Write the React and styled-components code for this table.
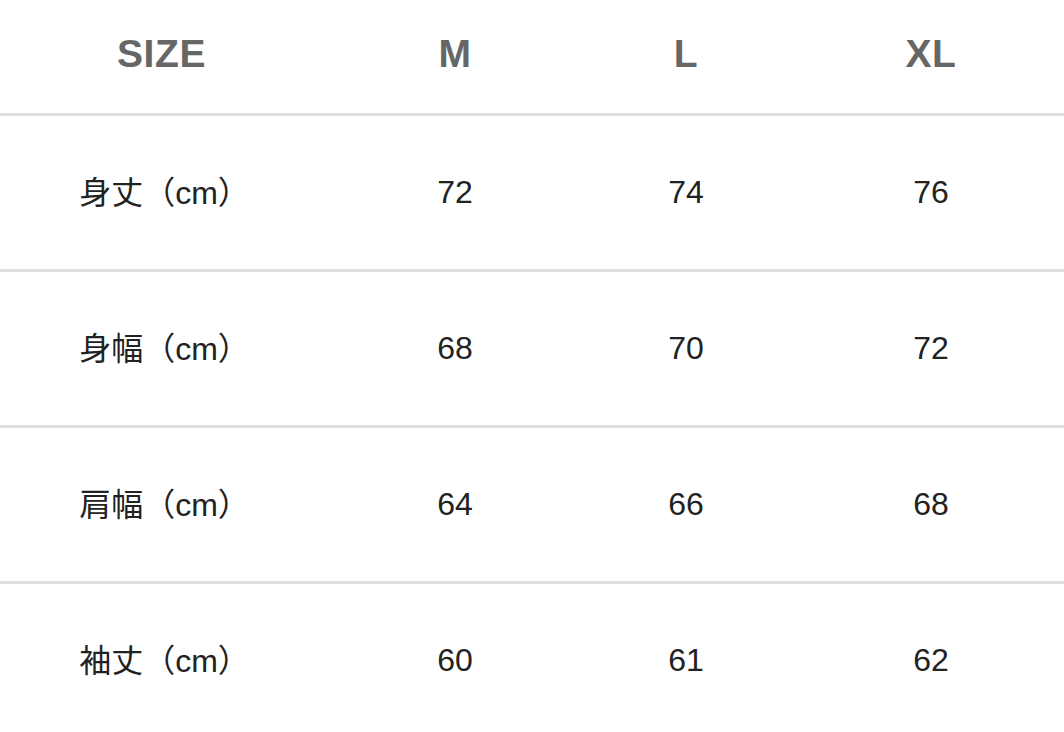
import React from "react";
import styled, { createGlobalStyle } from "styled-components";

const Global = createGlobalStyle`
  html, body {
    margin: 0;
    padding: 0;
    background: #ffffff;
    overflow: hidden;
  }
  body {
    font-family: "Liberation Sans", Arial, "Noto Sans CJK JP", sans-serif;
  }
`;

const Table = styled.div`
  display: grid;
  grid-template-columns: 323px 264px 198px 292px;
  width: 1077px;
`;

const Row = styled.div`
  display: contents;
`;

const Cell = styled.div`
  display: flex;
  align-items: center;
  justify-content: center;
  box-sizing: border-box;
  height: ${(p) => (p.$head ? "116px" : "156px")};
  padding-bottom: ${(p) => (p.$head ? "6px" : "0")};
  border-bottom: 3px solid #e0e0e0;
  font-family: "Liberation Sans", Arial, "Noto Sans CJK JP", sans-serif;
  font-size: ${(p) => (p.$head ? "39px" : "32px")};
  font-weight: ${(p) => (p.$head ? 700 : 400)};
  letter-spacing: ${(p) => (p.$head ? "0.6px" : "0")};
  color: ${(p) => (p.$head ? "#666666" : "#222222")};
  white-space: nowrap;
`;

const Label = styled.span`
  display: block;
  font-family: "Noto Sans CJK JP", "Liberation Sans", sans-serif;
  font-size: 32px;
  line-height: 1.2;
  font-weight: 400;
  color: #222222;
  padding-left: 6px;
  padding-bottom: 1px;
`;

const Latin = styled.span`
  font-family: "Liberation Sans", Arial, sans-serif;
`;

const rows = [
  { name: "身丈", v: ["72", "74", "76"] },
  { name: "身幅", v: ["68", "70", "72"] },
  { name: "肩幅", v: ["64", "66", "68"] },
  { name: "袖丈", v: ["60", "61", "62"] },
];

export default function App() {
  return (
    <>
      <Global />
      <Table>
        <Row>
          <Cell $head>SIZE</Cell>
          <Cell $head>M</Cell>
          <Cell $head>L</Cell>
          <Cell $head>XL</Cell>
        </Row>
        {rows.map((r) => (
          <Row key={r.name}>
            <Cell>
              <Label>
                {r.name}（<Latin>cm</Latin>）
              </Label>
            </Cell>
            {r.v.map((x, i) => (
              <Cell key={i}>{x}</Cell>
            ))}
          </Row>
        ))}
      </Table>
    </>
  );
}
